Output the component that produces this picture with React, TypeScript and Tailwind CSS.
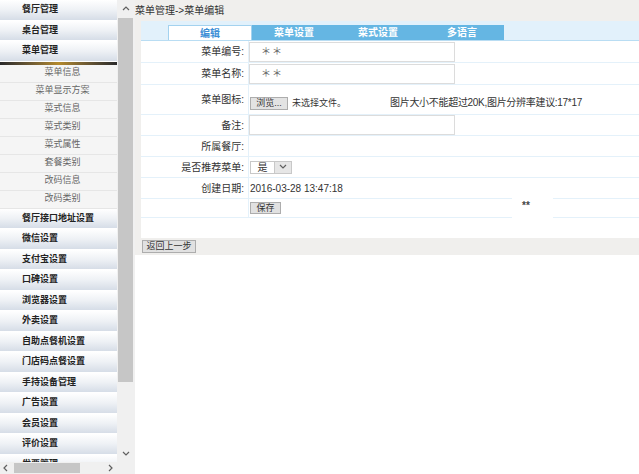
import React from 'react';

const topItems = ['餐厅管理', '桌台管理', '菜单管理'];
const subItems = ['菜单信息', '菜单显示方案', '菜式信息', '菜式类别', '菜式属性', '套餐类别', '改码信息', '改码类别'];
const moreItems = [
  '餐厅接口地址设置',
  '微信设置',
  '支付宝设置',
  '口碑设置',
  '浏览器设置',
  '外卖设置',
  '自助点餐机设置',
  '门店码点餐设置',
  '手持设备管理',
  '广告设置',
  '会员设置',
  '评价设置',
  '发票管理',
];

const tabs = ['编辑', '菜单设置', '菜式设置', '多语言'];

const Chevron = ({ dir }: { dir: 'up' | 'down' | 'left' | 'right' }) => {
  const pts = {
    up: '2,6 5,3 8,6',
    down: '2,3 5,6 8,3',
    left: '6,2 3,5 6,8',
    right: '3,2 6,5 3,8',
  }[dir];
  return (
    <svg width="10" height="10" viewBox="0 0 10 10">
      <polyline points={pts} fill="none" stroke="#606060" strokeWidth="1.2" />
    </svg>
  );
};

const MainItem = ({ label }: { label: string }) => (
  <div className="h-[20.5px] shrink-0 flex items-center pl-[22px] border-b border-white bg-linear-to-b from-[#ffffff] via-[#eef1f5] to-[#d6dde7] text-[9px] font-bold text-[#222]">
    {label}
  </div>
);

const Sidebar = () => (
  <aside className="w-[135px] h-full flex flex-col shrink-0">
    <div className="flex flex-1 min-h-0">
      <div className="w-[117px] overflow-hidden flex flex-col">
        {topItems.map((t) => (
          <MainItem key={t} label={t} />
        ))}
        <div className="h-[3px] shrink-0 bg-linear-to-r from-[#2a2a2a] via-[#b48a2c] to-[#2a2a2a]" />
        <div className="bg-[#f5f5f5] shrink-0">
          {subItems.map((t) => (
            <div
              key={t}
              className="h-[18px] flex items-center justify-center pl-[8px] border-b border-[#e6e6e6] text-[9px] text-[#666]"
            >
              {t}
            </div>
          ))}
        </div>
        {moreItems.map((t) => (
          <MainItem key={t} label={t} />
        ))}
      </div>
      <div className="w-[18px] bg-[#f0f0f0] flex flex-col">
        <div className="h-[18px] flex items-center justify-center pr-[1px]">
          <Chevron dir="up" />
        </div>
        <div className="h-[364px] ml-[1px] w-[15px] bg-[#c6c6c6]" />
        <div className="flex-1" />
        <div className="h-[16px] flex items-center justify-center pr-[1px]">
          <Chevron dir="down" />
        </div>
      </div>
    </div>
    <div className="h-[12px] flex bg-[#f0f0f0]">
      <div className="w-[117px] flex items-center">
        <div className="w-[12px] flex justify-center">
          <Chevron dir="left" />
        </div>
        <div className="ml-[2px] w-[66px] h-[10px] bg-[#c6c6c6]" />
        <div className="flex-1" />
        <div className="w-[12px] flex justify-center">
          <Chevron dir="right" />
        </div>
      </div>
      <div className="flex-1 bg-[#f0f0f0]" />
    </div>
  </aside>
);

const Row = ({
  label,
  h,
  children,
  divider = true,
  valueClass = 'items-center',
  border = true,
}: {
  label?: string;
  h: string;
  children?: React.ReactNode;
  divider?: boolean;
  valueClass?: string;
  border?: boolean;
}) => (
  <div className={`flex ${h} relative ${border ? 'border-b border-[#e4f1fa]' : ''}`}>
    <div
      className={`w-[108px] shrink-0 flex items-center justify-end pr-[4px] text-[10px] text-[#333] ${
        divider ? 'border-r border-[#e4f1fa]' : 'border-r border-transparent'
      }`}
    >
      {label ? `${label}:` : ''}
    </div>
    <div className={`flex-1 flex ${valueClass}`}>{children}</div>
  </div>
);

const TextInput = ({ value }: { value?: string }) => (
  <div className="w-[206px] h-[20px] border border-[#dcdcdc] bg-white flex items-center pl-[11px] text-[10px] text-[#666] tracking-[1px]">
    {value}
  </div>
);

export default function App() {
  return (
    <div className="w-[639px] h-[474px] flex overflow-hidden bg-white font-['Liberation_Sans','Noto_Sans_CJK_SC',sans-serif]">
      <Sidebar />
      <main className="flex-1 flex flex-col min-w-0">
        <div className="bg-[#f0efed] h-[255px] shrink-0 flex flex-col">
          <div className="h-[21px] flex items-center text-[10px] text-[#333]">菜单管理-&gt;菜单编辑</div>
          <div className="ml-[6px] bg-white flex flex-col">
            <div className="h-[20px] bg-[#e2f1fb] flex items-end pl-[27px] border-b border-[#b9ddf3]">
              {tabs.map((t, i) => (
                <div
                  key={t}
                  className={`h-[15px] w-[84px] flex items-center justify-center text-[10px] font-bold ${
                    i === 0
                      ? 'bg-white text-[#3d8fd6] border-x border-t border-[#a3d2ef]'
                      : 'bg-[#65b6e3] text-white'
                  }`}
                >
                  {t}
                </div>
              ))}
            </div>
            <Row label="菜单编号" h="h-[22px]">
              <TextInput value="＊＊" />
            </Row>
            <Row label="菜单名称" h="h-[22px]">
              <TextInput value="＊＊" />
            </Row>
            <Row label="菜单图标" h="h-[30px]" valueClass="items-end pb-[2px]">
              <div className="flex items-center">
                <div className="w-[141px] flex items-center">
                  <button className="ml-[1px] h-[13px] w-[38px] bg-[#e3e3e3] border border-[#adadad] text-[9px] text-[#333] leading-none flex items-center justify-center">
                    浏览...
                  </button>
                  <span className="ml-[4px] text-[9px] text-[#333]">未选择文件。</span>
                </div>
                <span className="mb-[2px] text-[10px] text-[#333] tracking-[-0.3px]">图片大小不能超过20K,图片分辨率建议:17*17</span>
              </div>
            </Row>
            <Row label="备注" h="h-[21px]">
              <TextInput />
            </Row>
            <Row label="所属餐厅" h="h-[21px]" />
            <Row label="是否推荐菜单" h="h-[21px]">
              <div className="ml-[1px] flex h-[13px]">
                <div className="w-[25px] border border-[#c8c8c8] bg-white flex items-center justify-center text-[10px] text-[#333]">
                  是
                </div>
                <div className="w-[17px] border border-l-0 border-[#c8c8c8] bg-[#e6e6e6] flex items-center justify-center">
                  <Chevron dir="down" />
                </div>
              </div>
            </Row>
            <Row label="创建日期" h="h-[21px]">
              <span className="ml-[1px] text-[10px] text-[#333]">2016-03-28 13:47:18</span>
            </Row>
            <Row h="h-[19px]">
              <button className="ml-[1px] h-[12px] w-[31px] bg-[#e1e1e1] border border-[#adadad] text-[9px] text-[#333] leading-none flex items-center justify-center">
                保存
              </button>
              <div className="absolute left-[371px] top-[-2px] w-[41px] h-[21px] bg-white flex justify-start pl-[10px] pt-[1px] text-[10px] font-bold text-[#444]">
                **
              </div>
            </Row>
            <Row h="h-[20px]" divider={false} border={false} />
          </div>
          <div className="pl-[7px] pt-[2px]">
            <button className="h-[13px] w-[54px] bg-[#e1e1e1] border border-[#adadad] text-[9px] text-[#333] leading-none flex items-center justify-center">
              返回上一步
            </button>
          </div>
        </div>
      </main>
    </div>
  );
}
